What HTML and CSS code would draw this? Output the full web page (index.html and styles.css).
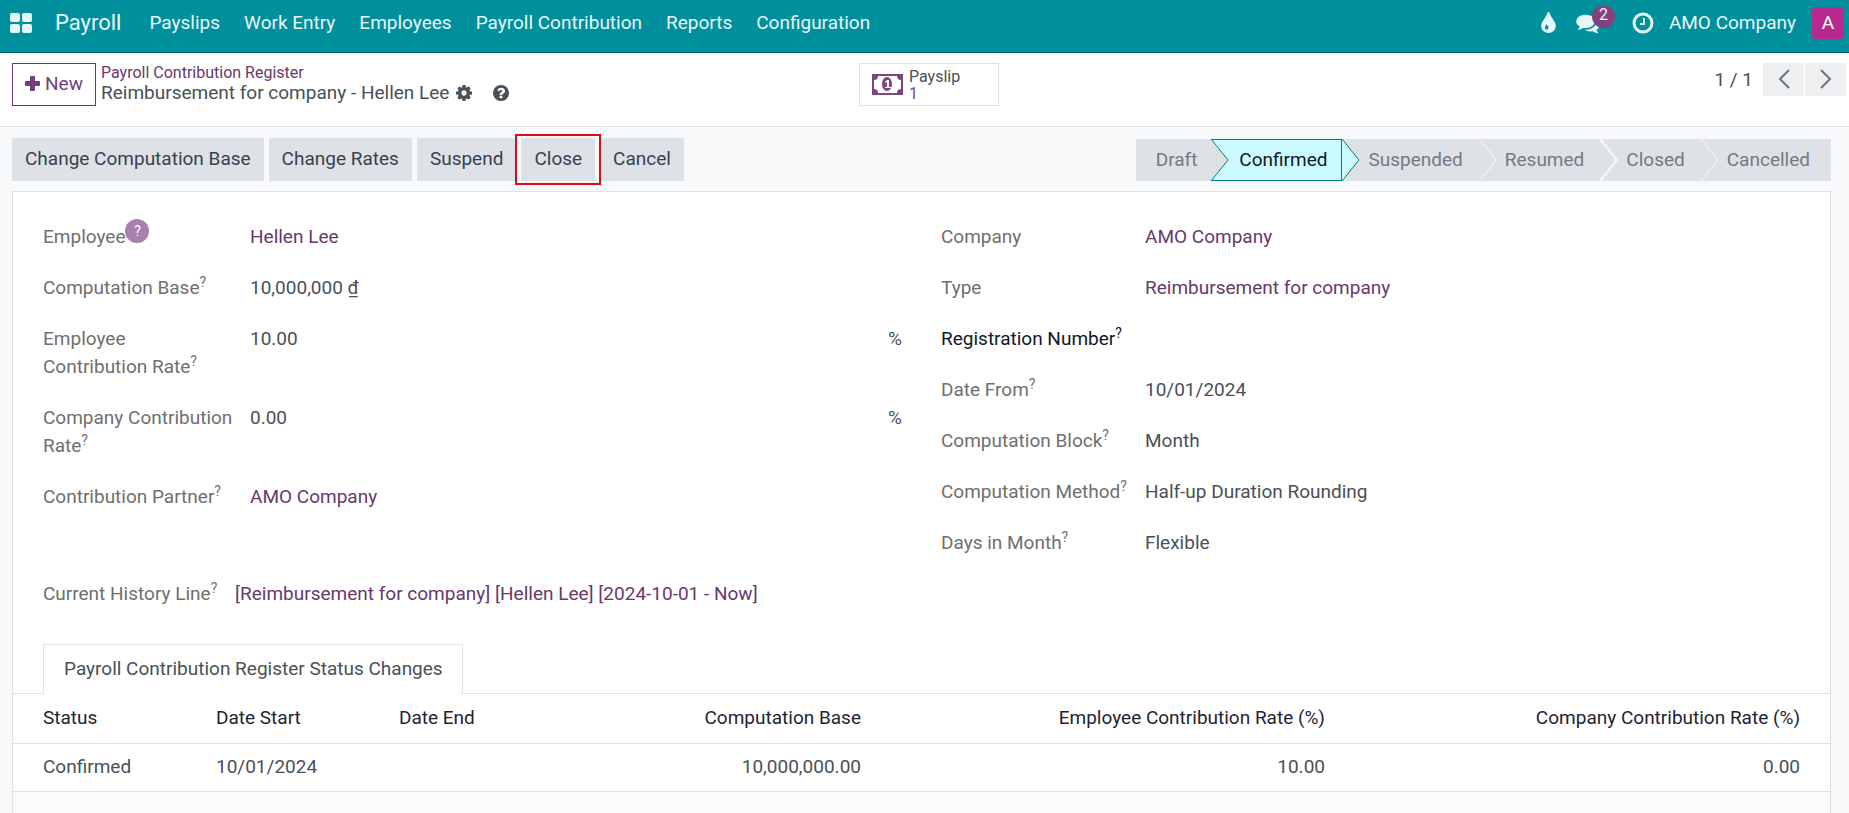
FILE: index.html
```
<!DOCTYPE html>
<html lang="en">
<head>
    <meta charset="UTF-8">
    <meta name="viewport" content="width=device-width, initial-scale=1.0">
    <title>Payroll - Reimbursement for company - Hellen Lee</title>
    <link rel="stylesheet" href="styles.css">
</head>
<body>
    <header class="navbar">
        <button class="icon-btn apps" type="button" aria-label="Apps">
            <svg width="22" height="20" viewBox="0 0 22 20" fill="currentColor">
                <rect x="0" y="0" width="10" height="9" rx="2"/>
                <rect x="12" y="0" width="10" height="9" rx="2"/>
                <rect x="0" y="11" width="10" height="9" rx="2"/>
                <rect x="12" y="11" width="10" height="9" rx="2"/>
            </svg>
        </button>
        <a class="brand" href="#">Payroll</a>
        <nav class="menu">
            <a href="#">Payslips</a>
            <a href="#">Work Entry</a>
            <a href="#">Employees</a>
            <a href="#">Payroll Contribution</a>
            <a href="#">Reports</a>
            <a href="#">Configuration</a>
        </nav>
        <div class="systray">
            <button class="icon-btn" type="button" aria-label="Theme">
                <svg width="15" height="22" viewBox="0 0 1024 1536" fill="currentColor"><path d="M512 1088q0-36-20-69-1-1-15.500-22.500t-25.500-38-25-44-21-50.500q-4-16-21-16t-21 16q-7 23-21 50.500t-25 44-25.500 38-15.500 22.500q-20 33-20 69 0 53 37.500 90.500t90.500 37.500 90.500-37.500 37.500-90.500zm512-128q0 212-150 362t-362 150-362-150-150-362q0-145 81-275 6-9 62.500-90.500t101-151 99.500-178 83-201.500q9-30 34-47t51-17 51.500 17 33.500 47q28 93 83 201.500t99.500 178 101 151 62.500 90.500q81 127 81 275z"/></svg>
            </button>
            <button class="icon-btn chat" type="button" aria-label="Messages">
                <svg width="24" height="21" viewBox="0 0 1792 1600" fill="currentColor"><path d="M1408 640q0 139-94 257t-256.500 186.500-353.500 68.500q-86 0-176-16-124 88-278 128-36 9-86 16h-3q-11 0-20.500-8t-11.500-21q-1-3-1-6.500t.5-6.500 2-6l2.500-5 3.500-5.500 4-5 4.500-5 4-4.500q5-6 23-25t26-29.500 22.500-29 25-38.500 20.500-44q-124-72-195-177t-71-224q0-139 94-257t256.500-186.500 353.500-68.500 353.500 68.500 256.500 186.500 94 257zm384 256q0 120-71 224.500t-195 176.500q10 24 20.500 44t25 38.500 22.500 29 26 29.500 23 25q1 1 4 4.500t4.500 5 4 5 3.500 5.500l2.500 5 2 6 .5 6.500-1 6.500q-3 14-13 22t-22 7q-50-7-86-16-154-40-278-128-90 16-176 16-271 0-472-132 58 4 88 4 161 0 309-45t264-129q125-92 192-212t67-254q0-77-23-152 129 71 204 178t75 230z"/></svg>
                <span class="badge">2</span>
            </button>
            <button class="icon-btn clock" type="button" aria-label="Activities">
                <svg width="22" height="22" viewBox="0 0 22 22" fill="none" stroke="currentColor"><circle cx="11" cy="11" r="9" stroke-width="3"/><path d="M12 6v6H8" stroke-width="2"/></svg>
            </button>
            <a class="company" href="#">AMO Company</a>
            <button class="avatar" type="button">A</button>
        </div>
    </header>

    <section class="control-panel">
        <div class="panel-left">
            <button class="btn-new" type="button">
                <svg width="15" height="15" viewBox="0 0 15 15" fill="currentColor"><path d="M6 0h3q1 0 1 1v4h4q1 0 1 1v3q0 1-1 1h-4v4q0 1-1 1H6q-1 0-1-1v-4H1q-1 0-1-1V6q0-1 1-1h4V1q0-1 1-1z"/></svg>
                New
            </button>
            <div class="breadcrumb">
                <a href="#">Payroll Contribution Register</a>
                <div class="current">
                    <span>Reimbursement for company - Hellen Lee</span>
                    <button class="icon-btn" type="button" aria-label="Actions">
                        <svg width="16" height="16" viewBox="0 0 1536 1536" fill="currentColor"><path d="M1024 768q0-106-75-181t-181-75-181 75-75 181 75 181 181 75 181-75 75-181zm512-109v222q0 12-8 23t-20 13l-185 28q-19 54-39 91 35 50 107 138 10 12 10 25t-9 23q-27 37-99 108t-94 71q-12 0-26-9l-138-108q-44 23-91 38-16 136-29 186-7 28-36 28H657q-14 0-24.500-8.500T621 1506l-28-184q-49-16-90-37l-141 107q-10 9-25 9-14 0-25-11-126-114-165-168-7-10-7-23 0-12 8-23 15-21 51-66.500t54-70.500q-27-50-41-99L29 913q-13-2-21-12.500T0 877V655q0-12 8-23t19-13l186-28q14-46 39-92-40-57-107-138-10-12-10-24 0-10 9-23 26-36 98.500-107.500T337 135q13 0 26 10l138 107q44-23 91-38 16-136 29-186 7-28 36-28h222q14 0 24.500 8.500T915 30l28 184q49 16 90 37l142-107q9-9 24-9 13 0 25 10 129 119 165 170 7 8 7 22 0 12-8 23-15 21-51 66.500t-54 70.500q26 50 41 98l183 28q13 2 21 12.500t8 23.500z"/></svg>
                    </button>
                    <button class="icon-btn help" type="button" aria-label="Help">
                        <svg width="16" height="16" viewBox="0 0 1536 1536" fill="currentColor"><path d="M896 1248v-192q0-14-9-23t-23-9H672q-14 0-23 9t-9 23v192q0 14 9 23t23 9h192q14 0 23-9t9-23zm256-672q0-88-55.500-163T958 297t-170-41q-243 0-371 213-15 24 8 42l132 100q7 6 19 6 16 0 25-12 53-68 86-92 34-24 86-24 48 0 85.500 26t37.500 59q0 38-20 61t-68 45q-63 28-115.500 86.500T640 892v36q0 14 9 23t23 9h192q14 0 23-9t9-23q0-19 21.500-49.500T972 829q32-18 49-28.500t46-35 44.500-48 28-60.500 12.500-81zm384 192q0 209-103 385.500T1153.500 1433 768 1536t-385.500-103T103 1153.500 0 768t103-385.500T382.500 103 768 0t385.500 103T1433 382.500 1536 768z"/></svg>
                    </button>
                </div>
            </div>
        </div>
        <button class="stat-btn" type="button">
            <svg width="31" height="21" viewBox="0 0 31 21"><rect width="31" height="21" fill="currentColor"/><path d="M6 2h19q0 4 4 4v9q-4 0-4 4H6q0-4-4-4V6q4 0 4-4z" fill="#fff"/><ellipse cx="15" cy="10" rx="5" ry="7" fill="currentColor"/><path d="M13 8l2-2h2v7h2v1h-6v-1h2V8l-1 1z" fill="#fff"/></svg>
            <span class="stat-text"><span>Payslip</span><span class="stat-value">1</span></span>
        </button>
        <div class="pager">
            <span>1 / 1</span>
            <div class="pager-btns">
                <button type="button" aria-label="Previous"><svg width="12" height="20" viewBox="0 0 12 20" fill="none" stroke="currentColor" stroke-width="2"><path d="M11 1L2 10l9 9"/></svg></button>
                <button type="button" aria-label="Next"><svg width="12" height="20" viewBox="0 0 12 20" fill="none" stroke="currentColor" stroke-width="2"><path d="M1 1l9 9-9 9"/></svg></button>
            </div>
        </div>
    </section>

    <main class="form-view">
        <div class="statusbar">
            <div class="actions">
                <button type="button">Change Computation Base</button>
                <button type="button">Change Rates</button>
                <button type="button">Suspend</button>
                <button class="marked" type="button">Close</button>
                <button type="button">Cancel</button>
            </div>
            <div class="stages">
                <button type="button">Draft</button>
                <button class="active" type="button">
                    <svg class="arrow-in" width="18" height="42" viewBox="0 0 18 42"><path d="M0 0l17 21L0 42" fill="#dee2e6" stroke="#017e84"/></svg>
                    Confirmed
                    <svg class="arrow-out" width="18" height="42" viewBox="0 0 18 42"><path d="M0 0l17 21L0 42" fill="#ccfbff" stroke="#017e84"/></svg>
                </button>
                <button type="button">Suspended
                    <svg class="arrow-out" width="18" height="42" viewBox="0 0 18 42"><path d="M0 0l17 21L0 42" fill="none" stroke="#f8f9fa"/></svg>
                </button>
                <button type="button">Resumed
                    <svg class="arrow-out" width="18" height="42" viewBox="0 0 18 42"><path d="M0 0l17 21L0 42" fill="none" stroke="#f8f9fa" stroke-width="2"/></svg>
                </button>
                <button type="button">Closed
                    <svg class="arrow-out" width="18" height="42" viewBox="0 0 18 42"><path d="M0 0l17 21L0 42" fill="none" stroke="#f8f9fa"/></svg>
                </button>
                <button type="button">Cancelled</button>
            </div>
        </div>

        <div class="sheet">
            <div class="groups">
                <dl class="group">
                    <div class="field"><dt>Employee<sup class="hint">?</sup></dt><dd><a href="#">Hellen Lee</a></dd></div>
                    <div class="field"><dt>Computation Base<sup>?</sup></dt><dd>10,000,000 ₫</dd></div>
                    <div class="field"><dt>Employee Contribution Rate<sup>?</sup></dt><dd>10.00 <span>%</span></dd></div>
                    <div class="field"><dt>Company Contribution Rate<sup>?</sup></dt><dd>0.00 <span>%</span></dd></div>
                    <div class="field"><dt>Contribution Partner<sup>?</sup></dt><dd><a href="#">AMO Company</a></dd></div>
                </dl>
                <dl class="group group-right">
                    <div class="field"><dt>Company</dt><dd><a href="#">AMO Company</a></dd></div>
                    <div class="field"><dt>Type</dt><dd><a href="#">Reimbursement for company</a></dd></div>
                    <div class="field"><dt class="empty">Registration Number<sup>?</sup></dt><dd></dd></div>
                    <div class="field"><dt>Date From<sup>?</sup></dt><dd>10/01/2024</dd></div>
                    <div class="field"><dt>Computation Block<sup>?</sup></dt><dd>Month</dd></div>
                    <div class="field"><dt>Computation Method<sup>?</sup></dt><dd>Half-up Duration Rounding</dd></div>
                    <div class="field"><dt>Days in Month<sup>?</sup></dt><dd>Flexible</dd></div>
                </dl>
            </div>
            <dl class="group history">
                <div class="field"><dt>Current History Line<sup>?</sup></dt><dd><a href="#">[Reimbursement for company] [Hellen Lee] [2024-10-01 - Now]</a></dd></div>
            </dl>

            <div class="tabs">
                <button class="tab" type="button">Payroll Contribution Register Status Changes</button>
            </div>
            <table>
                <colgroup>
                    <col class="col-status"><col class="col-start"><col class="col-end"><col class="col-base"><col class="col-rate"><col>
                </colgroup>
                <thead>
                    <tr>
                        <th>Status</th>
                        <th>Date Start</th>
                        <th>Date End</th>
                        <th class="num">Computation Base</th>
                        <th class="num">Employee Contribution Rate (%)</th>
                        <th class="num">Company Contribution Rate (%)</th>
                    </tr>
                </thead>
                <tbody>
                    <tr>
                        <td>Confirmed</td>
                        <td>10/01/2024</td>
                        <td></td>
                        <td class="num">10,000,000.00</td>
                        <td class="num">10.00</td>
                        <td class="num">0.00</td>
                    </tr>
                </tbody>
            </table>
            <div class="table-foot"></div>
        </div>
    </main>
</body>
</html>
```
FILE: styles.css
```
* {
    box-sizing: border-box;
}
body {
    display: flex;
    flex-direction: column;
    min-height: 100vh;
    margin: 0;
    background-color: #f8f9fa;
    color: #495057;
    font-family: Roboto, sans-serif;
    font-size: 19px;
    line-height: 28px;
}
a {
    color: #68396b;
    text-decoration: none;
}
button {
    margin: 0;
    padding: 0;
    border: none;
    background: none;
    color: inherit;
    font: inherit;
    cursor: pointer;
}
svg {
    display: block;
    flex: none;
}

/* Navbar */
.navbar {
    display: flex;
    align-items: center;
    height: 53px;
    padding: 0 5px 6px 10px;
    border-bottom: 1px solid #00626c;
    background-color: #008f9d;
    color: #e6f7f8;
}
.navbar a {
    color: inherit;
}
.brand {
    margin: 0 28px 0 23px;
    font-size: 22px;
}
.menu {
    display: flex;
    gap: 24px;
}
.systray {
    display: flex;
    align-items: center;
    margin-left: auto;
}
.chat {
    position: relative;
    margin: 0 32px 0 20px;
}
.badge {
    position: absolute;
    left: 16px;
    top: -8px;
    width: 23px;
    height: 23px;
    border-radius: 50%;
    background-color: #85407f;
    font-size: 16px;
    line-height: 19px;
}
.company {
    margin: 0 16px 0 15px;
}
.avatar {
    width: 32px;
    height: 32px;
    border-radius: 4px;
    background-color: #b7298f;
    color: #fff;
}

/* Control panel */
.control-panel {
    display: grid;
    grid-template-columns: 847px auto 1fr;
    align-items: start;
    height: 74px;
    padding: 10px 3px 0 12px;
    border-bottom: 1px solid #dee2e6;
    background-color: #fff;
}
.panel-left {
    display: flex;
    gap: 5px;
}
.btn-new {
    display: flex;
    align-items: center;
    justify-content: center;
    gap: 5px;
    width: 84px;
    height: 43px;
    padding-bottom: 2px;
    border: 1px solid #68396b;
    color: #714081;
}
.breadcrumb {
    font-size: 19px;
    line-height: 22px;
}
.breadcrumb > a {
    display: block;
    font-size: 16px;
    line-height: 19px;
}
.current {
    display: flex;
    align-items: center;
    gap: 7px;
}
.help {
    margin-left: 14px;
}
.stat-btn {
    display: flex;
    align-items: center;
    gap: 6px;
    width: 140px;
    height: 43px;
    padding-left: 12px;
    border: 1px solid #dee2e6;
    color: #7c4580;
    font-size: 16px;
    line-height: 17px;
    text-align: left;
}
.stat-text {
    display: flex;
    flex-direction: column;
    color: #495057;
}
.stat-value {
    color: #7c4580;
}
.pager {
    display: flex;
    justify-content: flex-end;
    align-items: center;
    gap: 10px;
}
.pager-btns {
    display: flex;
    gap: 1px;
}
.pager-btns button {
    display: flex;
    align-items: center;
    justify-content: center;
    width: 41px;
    height: 33px;
    padding-bottom: 2px;
    background-color: #eeeff1;
    color: #6c757d;
}

/* Status bar */
.form-view {
    display: flex;
    flex: 1;
    flex-direction: column;
    padding: 11px 18px 0 12px;
}
.statusbar {
    display: flex;
    justify-content: space-between;
    margin-bottom: 10px;
}
.actions {
    display: flex;
    gap: 5px;
}
.actions button {
    height: 43px;
    padding: 0 13px 2px;
    background-color: #dee2e6;
    color: #374151;
}
.actions .marked {
    position: relative;
    z-index: 1;
    box-shadow: 0 0 0 4px #f8f9fa;
}
.marked::after {
    position: absolute;
    inset: -4px -6px;
    border: 2px solid #dc0c14;
    content: "";
}
.stages {
    display: flex;
    margin-top: 1px;
    background-color: #dee2e6;
    color: #737a82;
}
.stages button {
    position: relative;
    height: 42px;
    padding: 0 16px 0 26px;
}
.stages button:first-child {
    padding: 0 14px 0 20px;
}
.stages button:last-child {
    padding-right: 21px;
}
.stages .active {
    padding: 0 14px 0 28px;
    border: 1px solid #017e84;
    border-left: none;
    background-color: #ccfbff;
    color: #111827;
}
.arrow-in,
.arrow-out {
    position: absolute;
    top: 0;
    z-index: 1;
}
.active .arrow-in,
.active .arrow-out {
    top: -1px;
}
.arrow-in {
    left: 0;
}
.arrow-out {
    left: 100%;
}
.active .arrow-out {
    margin-left: 1px;
}

/* Sheet */
.sheet {
    display: flex;
    flex: 1;
    flex-direction: column;
    border: 1px solid #dee2e6;
    border-bottom: none;
    background-color: #fff;
}
.groups {
    display: grid;
    grid-template-columns: 859px 1fr;
    gap: 39px;
    padding: 31px 30px 0;
}
.group {
    display: flex;
    flex-direction: column;
    gap: 23px;
    margin: 0;
}
.field {
    display: grid;
    grid-template-columns: 191px 1fr;
    gap: 16px;
}
.group-right .field {
    grid-template-columns: 188px 1fr;
}
.history {
    padding: 23px 30px 36px;
}
.history .field {
    grid-template-columns: 176px 1fr;
}
dt {
    color: #6f6f6f;
}
.empty {
    color: #111827;
}
dd {
    display: flex;
    justify-content: space-between;
    margin: 0;
}
sup {
    font-size: 14px;
    line-height: 0;
}
.hint {
    display: inline-block;
    width: 24px;
    height: 24px;
    margin: -8px 0;
    border-radius: 50%;
    background-color: #a97fab;
    color: #fff;
    line-height: 24px;
    text-align: center;
}

/* Tabs and table */
.tabs {
    display: flex;
    padding-left: 30px;
    border-bottom: 1px solid #dee2e6;
}
.tab {
    height: 50px;
    margin-bottom: -1px;
    padding: 0 19px 2px 20px;
    border: 1px solid #dee2e6;
    border-bottom: none;
    background-color: #fff;
}
table {
    width: 100%;
    border-collapse: collapse;
    table-layout: fixed;
}
th,
td {
    height: 49px;
    padding: 0 5px;
    border-bottom: 1px solid #dee2e6;
    text-align: left;
}
td {
    height: 48px;
}
th {
    color: #1f2430;
    font-weight: 400;
}
th:first-child,
td:first-child {
    padding-left: 30px;
}
th:last-child,
td:last-child {
    padding-right: 30px;
}
.num {
    text-align: right;
}
.col-status {
    width: 198px;
}
.col-start {
    width: 183px;
}
.col-end {
    width: 184px;
}
.col-base {
    width: 288px;
}
.col-rate {
    width: 464px;
}
.table-foot {
    flex: 1;
    background-color: #fbfbfb;
}
```
